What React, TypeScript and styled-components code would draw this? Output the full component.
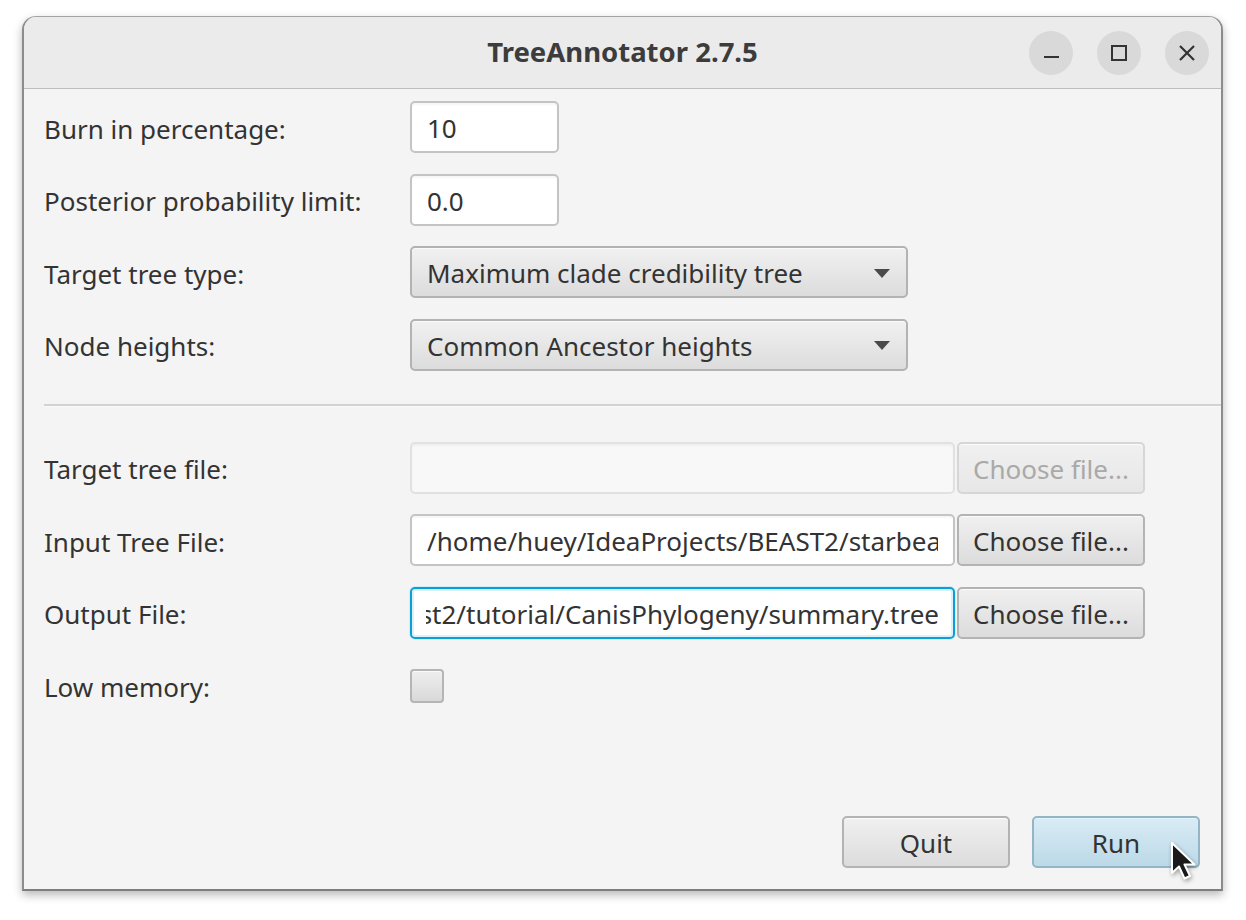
import React from "react";
import styled, { createGlobalStyle } from "styled-components";

const GlobalStyle = createGlobalStyle`
  html, body { margin: 0; padding: 0; background: #ffffff; }
  body { font-family: "Noto Sans", "Open Sans", sans-serif; }
  * { box-sizing: border-box; }
`;

const Desktop = styled.div`
  width: 1246px;
  height: 920px;
  padding: 16px 0 0 22px;
  background: #ffffff;
`;

const Window = styled.div`
  position: relative;
  width: 1201px;
  height: 875px;
  display: flex;
  flex-direction: column;
  border: 1px solid #a4a4a4;
  border-left: 2px solid #8c8c8c;
  border-right: 2px solid #8c8c8c;
  border-bottom: 2px solid #7e7e7e;
  border-radius: 14px 14px 0 0;
  box-shadow: 0 4px 10px rgba(0, 0, 0, 0.28);
  overflow: hidden;
  background: #f4f4f4;
`;

const TitleBar = styled.div`
  height: 72px;
  flex: none;
  display: grid;
  grid-template-columns: 1fr auto 1fr;
  align-items: center;
  background: #ebebeb;
  border-bottom: 1px solid #bcbcbc;
`;

const Title = styled.div`
  grid-column: 2;
  font-family: "Noto Sans", sans-serif;
  font-weight: 700;
  font-size: 27.5px;
  color: #3c3c3c;
  margin-top: -2px;
`;

const Controls = styled.div`
  grid-column: 3;
  justify-self: end;
  display: flex;
  gap: 24px;
  padding-right: 12px;
`;

const CircleButton = styled.div`
  width: 44px;
  height: 44px;
  border-radius: 50%;
  background: #d9d9d9;
  display: flex;
  align-items: center;
  justify-content: center;
  color: #333;
`;

const Content = styled.div`
  flex: 1;
  display: flex;
  flex-direction: column;
  padding: 12px 0 0 20px;
`;

const FormGrid = styled.div`
  display: grid;
  grid-template-columns: 366px auto;
  grid-auto-rows: 52px;
  row-gap: 20.5px;
  align-items: center;
`;

const Label = styled.div`
  font-size: 26px;
  color: #333333;
  white-space: nowrap;
  line-height: 1;
  padding-top: 3px;
`;

const TextBox = styled.div<{ $width: number; $focused?: boolean; $disabled?: boolean }>`
  width: ${(p) => p.$width}px;
  height: 52px;
  display: flex;
  align-items: center;
  overflow: hidden;
  font-size: 26px;
  color: #333333;
  border-radius: 5px;
  padding: 2px ${(p) => (p.$focused ? 14 : 15)}px 0;
  background: ${(p) => (p.$disabled ? "#f8f8f8" : "#ffffff")};
  border: ${(p) =>
    p.$focused ? "2px solid #0a9fd5" : p.$disabled ? "2px solid #e1e1e1" : "2px solid #c4c4c4"};
  box-shadow: ${(p) =>
    p.$focused
      ? "inset 0 0 0 2px #dcf0f9, 0 0 0 1px #d4ecf7"
      : "inset 0 2px 2px rgba(0,0,0,0.04)"};
`;

const FieldText = styled.div<{ $alignEnd?: boolean }>`
  flex: 1;
  min-width: 0;
  display: flex;
  justify-content: ${(p) => (p.$alignEnd ? "flex-end" : "flex-start")};
  overflow: hidden;
  white-space: nowrap;
`;

const Combo = styled.div`
  width: 498px;
  height: 52px;
  display: flex;
  align-items: center;
  justify-content: space-between;
  padding: 2px 16px 0 15px;
  font-size: 26px;
  color: #333333;
  border: 2px solid #b3b3b3;
  border-radius: 5px;
  background: linear-gradient(#f1f1f1, #dcdcdc);
  box-shadow: inset 0 1px 0 #fafafa;
  white-space: nowrap;
`;

const Arrow = styled.div`
  width: 0;
  height: 0;
  border-left: 8.5px solid transparent;
  border-right: 8.5px solid transparent;
  border-top: 9px solid #4a4a4a;
`;

const Separator = styled.div`
  margin: 33px 0 35px 0;
  height: 2px;
  background: #d2d2d2;
  border-bottom: 1px solid #fafafa;
  box-sizing: content-box;
`;

const FileRow = styled.div`
  display: flex;
  align-items: center;
  gap: 2px;
`;

const Button = styled.div<{ $width: number; $disabled?: boolean; $primary?: boolean }>`
  width: ${(p) => p.$width}px;
  height: 52px;
  display: flex;
  align-items: center;
  justify-content: center;
  padding-top: 2px;
  font-size: 26px;
  white-space: nowrap;
  border-radius: 5px;
  color: ${(p) => (p.$disabled ? "#a9a9a9" : "#333333")};
  border: 2px solid ${(p) => (p.$disabled ? "#d6d6d6" : p.$primary ? "#94b5c5" : "#b3b3b3")};
  background: ${(p) =>
    p.$disabled
      ? "linear-gradient(#f0f0f0, #e7e7e7)"
      : p.$primary
      ? "linear-gradient(#d8ecf6, #bcd9e7)"
      : "linear-gradient(#f0f0f0, #dcdcdc)"};
  box-shadow: inset 0 1px 0 ${(p) => (p.$primary ? "#e6f3fa" : "#fbfbfb")};
`;

const CheckBox = styled.div`
  width: 34px;
  height: 34px;
  margin-top: 2px;
  border: 2px solid #b5b5b5;
  border-radius: 4px;
  background: linear-gradient(#eeeeee, #d9d9d9);
  box-shadow: inset 0 1px 0 #fafafa;
`;

const Footer = styled.div`
  margin-top: auto;
  display: flex;
  justify-content: flex-end;
  gap: 22px;
  padding: 0 21px 21px 0;
`;

const Cursor = styled.svg`
  position: absolute;
  left: 1146px;
  top: 824px;
  filter: drop-shadow(1px 2px 2px rgba(0, 0, 0, 0.35));
`;

export default function App() {
  return (
    <>
      <GlobalStyle />
      <Desktop>
        <Window>
          <TitleBar>
            <Title>TreeAnnotator 2.7.5</Title>
            <Controls>
              <CircleButton>
                <svg width="18" height="18" viewBox="0 0 18 18">
                  <rect x="2" y="12" width="15" height="2" fill="#333" />
                </svg>
              </CircleButton>
              <CircleButton>
                <svg width="18" height="18" viewBox="0 0 18 18">
                  <rect x="2" y="2" width="14" height="14" fill="none" stroke="#333" strokeWidth="2" />
                </svg>
              </CircleButton>
              <CircleButton>
                <svg width="18" height="18" viewBox="0 0 18 18">
                  <path d="M2 2 L16 16 M16 2 L2 16" stroke="#333" strokeWidth="2.2" />
                </svg>
              </CircleButton>
            </Controls>
          </TitleBar>
          <Content>
            <FormGrid>
              <Label>Burn in percentage:</Label>
              <TextBox $width={149}>
                <FieldText>10</FieldText>
              </TextBox>
              <Label>Posterior probability limit:</Label>
              <TextBox $width={149}>
                <FieldText>0.0</FieldText>
              </TextBox>
              <Label>Target tree type:</Label>
              <Combo>
                <span>Maximum clade credibility tree</span>
                <Arrow />
              </Combo>
              <Label>Node heights:</Label>
              <Combo>
                <span>Common Ancestor heights</span>
                <Arrow />
              </Combo>
            </FormGrid>
            <Separator />
            <FormGrid>
              <Label>Target tree file:</Label>
              <FileRow>
                <TextBox $width={545} $disabled />
                <Button $width={188} $disabled>Choose file...</Button>
              </FileRow>
              <Label>Input Tree File:</Label>
              <FileRow>
                <TextBox $width={545}>
                  <FieldText>/home/huey/IdeaProjects/BEAST2/starbeast2/tutorial/CanisPhylogeny/canis.trees</FieldText>
                </TextBox>
                <Button $width={188}>Choose file...</Button>
              </FileRow>
              <Label>Output File:</Label>
              <FileRow>
                <TextBox $width={545} $focused>
                  <FieldText $alignEnd>
                    <span>/home/huey/IdeaProjects/BEAST2/starbeast2/tutorial/CanisPhylogeny/summary.tree</span>
                  </FieldText>
                </TextBox>
                <Button $width={188}>Choose file...</Button>
              </FileRow>
              <Label>Low memory:</Label>
              <CheckBox />
            </FormGrid>
            <Footer>
              <Button $width={168}>Quit</Button>
              <Button $width={168} $primary>Run</Button>
            </Footer>
          </Content>
          <Cursor width="30" height="42" viewBox="0 0 30 42">
            <path
              d="M2 2 L2 32 L9 25.5 L14.5 37.5 L20 35 L14.5 23.5 L24.5 23.5 Z"
              fill="#1a1a1a"
              stroke="#ffffff"
              strokeWidth="2"
              strokeLinejoin="round"
            />
          </Cursor>
        </Window>
      </Desktop>
    </>
  );
}
